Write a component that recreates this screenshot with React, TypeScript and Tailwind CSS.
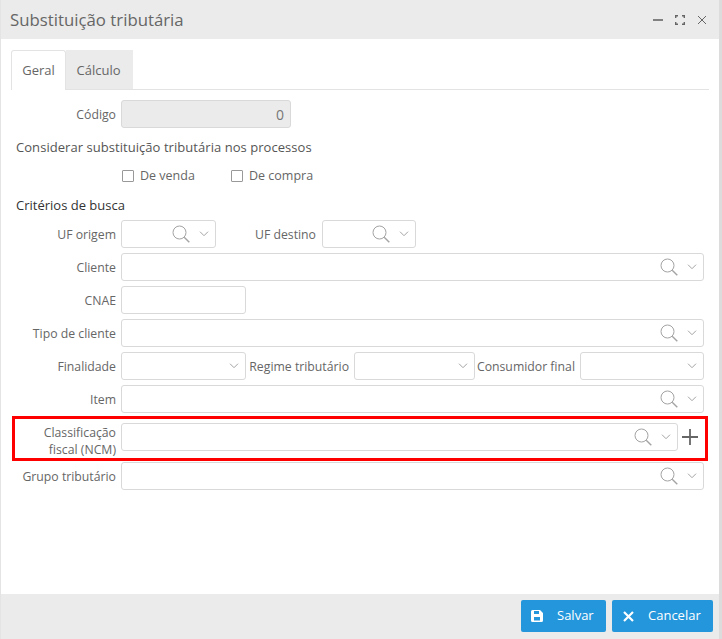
const font = { fontFamily: '"Open Sans", "Noto Sans", sans-serif' };

function SearchIcon() {
  return (
    <svg width="18" height="18" viewBox="0 0 18 18" fill="none" stroke="#a3a3a3" className="shrink-0">
      <circle cx="7.5" cy="7.5" r="6.5" strokeWidth="1" />
      <path d="M12.2 12.2 L17.3 17.3" strokeWidth="1.4" />
    </svg>
  );
}

function Chevron() {
  return (
    <svg width="10" height="6" viewBox="0 0 10 6" fill="none" stroke="#a3a3a3" strokeWidth="1" className="shrink-0">
      <path d="M1 0.7 L5 4.7 L9 0.7" />
    </svg>
  );
}

function Label({ children, className = "" }: { children: React.ReactNode; className?: string }) {
  return <div className={`text-right text-[12.25px] text-[#666] shrink-0 whitespace-nowrap pt-[2px] ${className}`}>{children}</div>;
}

function Field({ className = "", search = false, chevron = false }: { className?: string; search?: boolean; chevron?: boolean }) {
  return (
    <div className={`h-7 border border-[#d9d9d9] rounded-[3px] bg-white flex items-center justify-end ${className}`}>
      {search && <SearchIcon />}
      {chevron && (
        <span className="ml-[9px] mr-[6px]">
          <Chevron />
        </span>
      )}
    </div>
  );
}

function LookupRow({ label, className = "" }: { label: string; className?: string }) {
  return (
    <div className={`flex items-center ${className}`}>
      <Label className="w-[105px] mr-[5px]">{label}</Label>
      <Field className="w-[583px]" search chevron />
    </div>
  );
}

export default function App() {
  return (
    <div className="w-[722px] h-[639px] bg-[#dcdcdc] overflow-hidden" style={font}>
      <div className="w-[719px] h-[639px] bg-white flex flex-col border-l border-[#e4e4e4]">
        <div className="h-[39px] bg-[#ebebeb] flex items-center justify-between shrink-0 pl-[9px] pr-[12px]">
          <span className="text-[16.8px] text-[#666] pt-[1px]">Substituição tributária</span>
          <div className="flex items-center gap-[12px]">
            <svg width="10" height="10" viewBox="0 0 10 10" stroke="#666" strokeWidth="1.6"><path d="M0 5 H10" /></svg>
            <svg width="10" height="10" viewBox="0 0 10 10" fill="none" stroke="#666" strokeWidth="1.4">
              <path d="M0.7 3 V0.7 H3 M7 0.7 H9.3 V3 M9.3 7 V9.3 H7 M3 9.3 H0.7 V7" />
            </svg>
            <svg width="10" height="10" viewBox="0 0 10 10" stroke="#666" strokeWidth="1"><path d="M1 1 L9 9 M9 1 L1 9" /></svg>
          </div>
        </div>

        <div className="flex-1 pl-[10px] pr-[10px]">
          <div className="flex mt-[11px] border-b border-[#e3e3e3] h-[40px] w-[698px]">
            <div className="w-[55px] h-[40px] bg-white border border-b-0 border-[#e3e3e3] rounded-t-[3px] flex items-center justify-center text-[13px] text-[#666]">Geral</div>
            <div className="w-[67px] h-[39px] bg-[#ebebeb] flex items-center justify-center text-[13px] text-[#666] pr-[2px] pt-[2px]">Cálculo</div>
          </div>

          <div className="flex items-center mt-[10px]">
            <Label className="w-[105px] mr-[5px]">Código</Label>
            <div className="w-[170px] h-7 border border-[#d9d9d9] rounded-[3px] bg-[#ebebeb] flex items-center justify-end pr-[6px] text-[14px] text-[#777]">0</div>
          </div>

          <div className="text-[13px] tracking-[0.05px] text-[#555] mt-[10px] ml-[5px] leading-[18px]">Considerar substituição tributária nos processos</div>

          <div className="flex items-center mt-[11px] ml-[111px] h-[18px] text-[12.5px] text-[#666]">
            <span className="w-[12px] h-[12px] border border-[#999] rounded-[1px] mr-[6px]" />
            <span className="w-[91px]">De venda</span>
            <span className="w-[12px] h-[12px] border border-[#999] rounded-[1px] mr-[6px]" />
            <span>De compra</span>
          </div>

          <div className="text-[13px] font-medium text-[#333] mt-[11px] ml-[5px] leading-[18px]">Critérios de busca</div>

          <div className="flex items-center mt-[6px]">
            <Label className="w-[105px] mr-[5px]">UF origem</Label>
            <Field className="w-[95px]" search chevron />
            <Label className="w-[100px] mr-[6px]">UF destino</Label>
            <Field className="w-[94px]" search chevron />
          </div>

          <LookupRow label="Cliente" className="mt-[5px]" />

          <div className="flex items-center mt-[5px]">
            <Label className="w-[105px] mr-[5px]">CNAE</Label>
            <Field className="w-[125px]" />
          </div>

          <LookupRow label="Tipo de cliente" className="mt-[5px]" />

          <div className="flex items-center mt-[5px]">
            <Label className="w-[105px] mr-[5px]">Finalidade</Label>
            <Field className="w-[125px]" chevron />
            <Label className="w-[103px] mr-[5px]">Regime tributário</Label>
            <Field className="w-[121px]" chevron />
            <Label className="w-[100px] mr-[5px]">Consumidor final</Label>
            <Field className="w-[124px]" chevron />
          </div>

          <LookupRow label="Item" className="mt-[5px]" />

          <div className="flex items-start mt-[3px] ml-[1px] w-[696px] h-[45px] border-[3px] border-[#ff0000]">
            <Label className="w-[101px] mr-[5px] leading-[17px] mt-[3px]">
              Classificação
              <br />
              fiscal (NCM)
            </Label>
            <Field className="w-[557px] mt-[4px]" search chevron />
            <svg width="16" height="16" viewBox="0 0 16 16" stroke="#666" strokeWidth="1.8" className="ml-[4px] mt-[10px] shrink-0">
              <path d="M8 0 V16 M0 8 H16" />
            </svg>
          </div>

          <LookupRow label="Grupo tributário" className="mt-[1px]" />
        </div>

        <div className="h-[45px] bg-[#ebebeb] shrink-0 flex items-start justify-end gap-[6px] pt-[6px] pr-[6px]">
          <button className="w-[85px] h-8 bg-[#2496db] rounded-[2px] flex items-center text-white text-[13px] pl-[10px]">
            <svg width="12" height="12" viewBox="0 0 12 12" className="mr-[14px] shrink-0" fill="#fff">
              <path fillRule="evenodd" d="M1.5 0 H9 L12 3 V10.5 A1.5 1.5 0 0 1 10.5 12 H1.5 A1.5 1.5 0 0 1 0 10.5 V1.5 A1.5 1.5 0 0 1 1.5 0 Z M3 1 V4 H8 V1 Z M3 7 V10.5 H9 V7 Z" />
            </svg>
            Salvar
          </button>
          <button className="w-[101px] h-8 bg-[#2496db] rounded-[2px] flex items-center text-white text-[13px] pl-[11px]">
            <svg width="11" height="11" viewBox="0 0 11 11" stroke="#fff" strokeWidth="2.2" className="mr-[14px] shrink-0">
              <path d="M1 1 L10 10 M10 1 L1 10" />
            </svg>
            Cancelar
          </button>
        </div>
      </div>
    </div>
  );
}
